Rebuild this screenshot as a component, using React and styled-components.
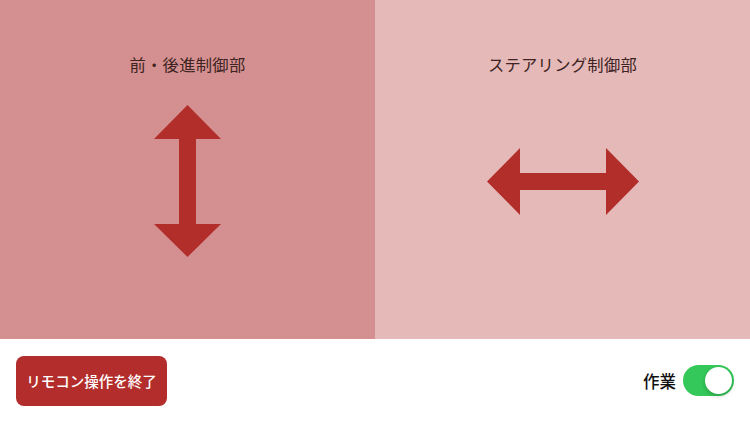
import React, { useState } from 'react'
import styled, { createGlobalStyle } from 'styled-components'

const GlobalStyle = createGlobalStyle`
  html, body {
    margin: 0;
    padding: 0;
    background: #ffffff;
    font-family: "Noto Sans CJK JP", "Noto Sans", sans-serif;
  }
`

const Root = styled.div`
  width: 750px;
  height: 422px;
  display: flex;
  flex-direction: column;
  overflow: hidden;
`

const Panels = styled.div`
  display: flex;
  height: 339px;
`

const Panel = styled.div`
  flex: 1;
  display: flex;
  flex-direction: column;
  align-items: center;
  background: ${(props) => props.bg};
`

const Title = styled.div`
  margin-top: 54px;
  height: 20px;
  line-height: 20px;
  font-size: 16.3px;
  color: #3d2322;
  letter-spacing: 0.3px;
`

const ArrowArea = styled.div`
  height: 214px;
  display: flex;
  align-items: center;
  justify-content: center;
`

const Footer = styled.div`
  flex: 1;
  display: flex;
  align-items: center;
  justify-content: space-between;
  padding: 0 16px;
`

const EndButton = styled.button`
  height: 50px;
  padding: 0;
  width: 151px;
  border: none;
  border-radius: 8px;
  background: #b22d2b;
  color: #ffffff;
  font-family: inherit;
  font-size: 14.5px;
  font-weight: 500;
  white-space: nowrap;
`

const SwitchRow = styled.div`
  display: flex;
  align-items: center;
  gap: 7px;
`

const SwitchLabel = styled.span`
  font-size: 16.5px;
  font-weight: 500;
  color: #111111;
`

const Track = styled.div`
  width: 51px;
  height: 31px;
  border-radius: 16px;
  background: ${(props) => (props.on ? '#34c759' : '#e5e5ea')};
  display: flex;
  align-items: center;
  justify-content: ${(props) => (props.on ? 'flex-end' : 'flex-start')};
  padding: 0 2px;
  box-sizing: border-box;
  cursor: pointer;
`

const Knob = styled.div`
  width: 27px;
  height: 27px;
  border-radius: 50%;
  background: #ffffff;
  box-shadow: 0 2px 4px rgba(0, 0, 0, 0.2);
`

const VerticalArrow = () => (
  <svg width="67" height="152" viewBox="0 0 67 152">
    <path
      d="M33.5 0 L67 34 L42 34 L42 119 L67 119 L33.5 152 L0 119 L25 119 L25 34 L0 34 Z"
      fill="#b22e2b"
    />
  </svg>
)

const HorizontalArrow = () => (
  <svg width="152" height="67" viewBox="0 0 152 67">
    <path
      d="M0 33.5 L33 0 L33 25 L119 25 L119 0 L152 33.5 L119 67 L119 42 L33 42 L33 67 Z"
      fill="#b22e2b"
    />
  </svg>
)

const App = () => {
  const [working, setWorking] = useState(true)

  return (
    <Root>
      <GlobalStyle />
      <Panels>
        <Panel bg="#d49090">
          <Title>前・後進制御部</Title>
          <ArrowArea>
            <VerticalArrow />
          </ArrowArea>
        </Panel>
        <Panel bg="#e4b9b8">
          <Title>ステアリング制御部</Title>
          <ArrowArea>
            <HorizontalArrow />
          </ArrowArea>
        </Panel>
      </Panels>
      <Footer>
        <EndButton type="button">リモコン操作を終了</EndButton>
        <SwitchRow>
          <SwitchLabel>作業</SwitchLabel>
          <Track on={working} onClick={() => setWorking(!working)}>
            <Knob />
          </Track>
        </SwitchRow>
      </Footer>
    </Root>
  )
}

export default App
